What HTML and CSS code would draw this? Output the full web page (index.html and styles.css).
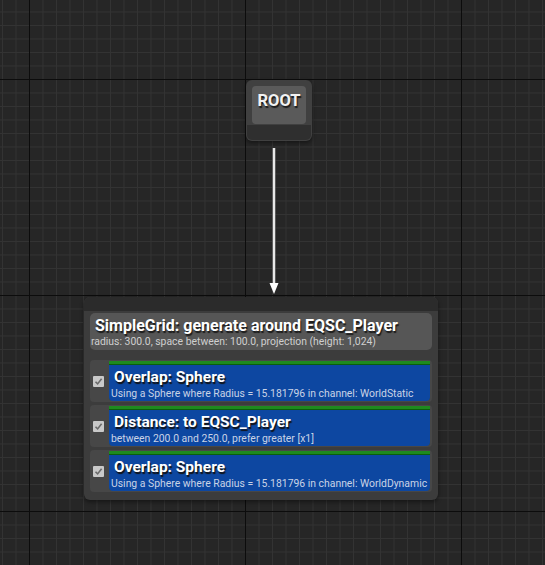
FILE: index.html
```html
<!DOCTYPE html>
<html>
<head>
<meta charset="utf-8">
<link rel="stylesheet" href="styles.css">
</head>
<body>
<div class="canvas">
  <div class="node root-node">
    <div class="root-top"><div class="root-label">ROOT</div></div>
    <div class="root-bottom"></div>
  </div>

  <svg class="edge" width="20" height="150" viewBox="0 0 20 150">
    <line x1="6" y1="0" x2="6" y2="138" stroke="#8a8a8a" stroke-width="3"/>
    <line x1="6" y1="0" x2="6" y2="138" stroke="#ffffff" stroke-width="1.6"/>
    <polygon points="1.5,135 10.5,135 6,146" fill="#ffffff"/>
  </svg>

  <div class="node gen-node">
    <div class="gen-band"></div>
    <div class="gen-header">
      <div class="gen-title">SimpleGrid: generate around EQSC_Player</div>
      <div class="gen-sub">radius: 300.0, space between: 100.0, projection (height: 1,024)</div>
    </div>
    <div class="tests">
      <div class="test-row">
        <span class="check"><svg width="11" height="11" viewBox="0 0 11 11"><path d="M2.5 5.8 L4.6 7.9 L8.6 2.8" fill="none" stroke="#6b6b6b" stroke-width="1.6"/></svg></span>
        <div class="test-box">
          <div class="test-title">Overlap: Sphere</div>
          <div class="test-sub">Using a Sphere where Radius = 15.181796 in channel: WorldStatic</div>
        </div>
      </div>
      <div class="test-row">
        <span class="check"><svg width="11" height="11" viewBox="0 0 11 11"><path d="M2.5 5.8 L4.6 7.9 L8.6 2.8" fill="none" stroke="#6b6b6b" stroke-width="1.6"/></svg></span>
        <div class="test-box">
          <div class="test-title">Distance: to EQSC_Player</div>
          <div class="test-sub">between 200.0 and 250.0, prefer greater [x1]</div>
        </div>
      </div>
      <div class="test-row">
        <span class="check"><svg width="11" height="11" viewBox="0 0 11 11"><path d="M2.5 5.8 L4.6 7.9 L8.6 2.8" fill="none" stroke="#6b6b6b" stroke-width="1.6"/></svg></span>
        <div class="test-box">
          <div class="test-title">Overlap: Sphere</div>
          <div class="test-sub">Using a Sphere where Radius = 15.181796 in channel: WorldDynamic</div>
        </div>
      </div>
    </div>
  </div>
</div>
</body>
</html>
```
FILE: styles.css
```css
html, body {
  margin: 0;
  padding: 0;
}
body {
  width: 545px;
  height: 565px;
  overflow: hidden;
  font-family: Roboto, "Liberation Sans", sans-serif;
}
.canvas {
  position: relative;
  width: 545px;
  height: 565px;
  background-color: #262626;
  background-image:
    linear-gradient(to right, #0c0c0c 1px, transparent 1px),
    linear-gradient(to bottom, #0c0c0c 1px, transparent 1px),
    linear-gradient(to right, #333333 1px, transparent 1px),
    linear-gradient(to bottom, #333333 1px, transparent 1px);
  background-size: 216px 216px, 216px 216px, 13.5px 13.5px, 13.5px 13.5px;
  background-position: 29px 79px, 29px 79px, 29px 79px, 29px 79px;
}
.node {
  position: absolute;
  box-shadow: 0 2px 4px rgba(0,0,0,0.45);
}
.root-node {
  left: 246px;
  top: 80px;
  width: 66px;
  height: 61px;
  border-radius: 6px;
  background: #404040;
  display: flex;
  flex-direction: column;
  overflow: hidden;
}
.root-top {
  flex: 0 0 45px;
  padding: 6px 6px 1px;
  box-sizing: border-box;
}
.root-label {
  height: 38px;
  background: #5a5a5a;
  border-radius: 4px;
  color: #f2f2f2;
  font-weight: bold;
  font-size: 16.5px;
  text-align: center;
  padding-top: 5px;
  box-sizing: border-box;
  text-shadow: 1px 2px 1px #1a1a1a;
}
.root-bottom {
  flex: 1;
  background: #2f2f2f;
  margin: 0 1px 1px;
  border-radius: 0 0 5px 5px;
}
.edge {
  position: absolute;
  left: 268px;
  top: 148px;
}
.gen-node {
  left: 84px;
  top: 297px;
  width: 354px;
  height: 203px;
  border-radius: 6px;
  background: #3c3c3c;
  display: flex;
  flex-direction: column;
  overflow: hidden;
}
.gen-band {
  height: 14px;
  background: #2b2b2b;
}
.gen-header {
  margin: 2px 6px 0;
  height: 37px;
  background: #565656;
  border-radius: 5px;
  padding: 4px 0 0 5px;
  box-sizing: border-box;
}
.gen-title {
  color: #ffffff;
  font-weight: bold;
  font-size: 16px;
  line-height: 18px;
  text-shadow: 1px 2px 1px #1a1a1a;
  white-space: nowrap;
}
.gen-sub {
  color: #cfcfcf;
  font-size: 10.4px;
  line-height: 12px;
  margin: 1px 0 0 -4px;
  white-space: nowrap;
}
.tests {
  display: flex;
  flex-direction: column;
  gap: 3px;
  margin-top: 10px;
}
.test-row {
  margin: 0 6px;
  height: 42px;
  background: #474747;
  border-radius: 4px;
  display: flex;
  align-items: center;
}
.check {
  width: 11px;
  height: 11px;
  margin-left: 3px;
  margin-right: 5px;
  background: #c9c9c9;
  border-radius: 1px;
  display: flex;
}
.test-box {
  flex: 1;
  height: 40px;
  margin-right: 2px;
  background: #0d47a1;
  border-radius: 0 0 4px 4px;
  border-top: 3px solid #1e8a1e;
  box-shadow: inset 0 1px 0 #0b5e0b;
  box-sizing: border-box;
  padding: 4px 0 0 5px;
  overflow: hidden;
}
.test-title {
  color: #ffffff;
  font-weight: bold;
  font-size: 15.5px;
  line-height: 19px;
  text-shadow: 1px 2px 1px #111111;
  white-space: nowrap;
}
.test-sub {
  color: #c9d3e6;
  font-size: 10.4px;
  line-height: 12px;
  margin: 1px 0 0 -3px;
  white-space: nowrap;
}
```
